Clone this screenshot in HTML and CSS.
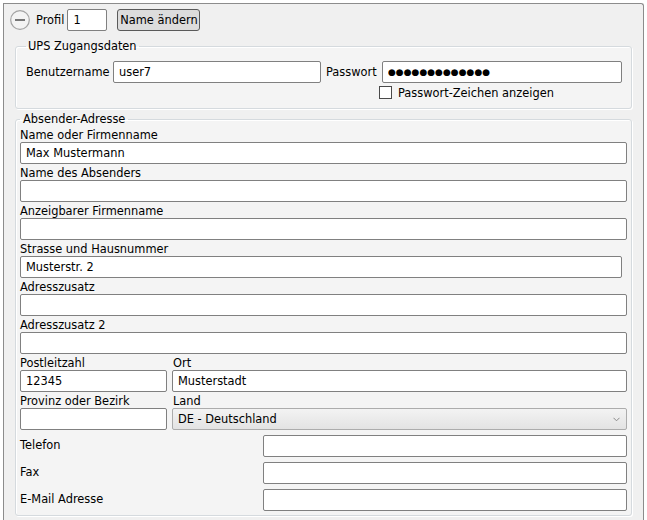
FILE: index.html
```html
<!DOCTYPE html>
<html lang="de">
<head>
<meta charset="utf-8">
<title>Profil</title>
<link rel="stylesheet" href="styles.css">
</head>
<body>
<div class="panel">
  <div class="head">
    <span class="toggle">
      <svg width="20" height="20" viewBox="0 0 20 20">
        <circle cx="10" cy="10" r="9.3" fill="#f3f3f3" stroke="#a3a3a3" stroke-width="1.2"/>
        <rect x="5" y="9" width="10" height="2" fill="#767676"/>
      </svg>
    </span>
    <span class="profil-label">Profil</span>
    <input class="inp profile" type="text" value="1">
    <button class="btn" type="button">Name ändern</button>
  </div>

  <fieldset class="group ups">
    <legend>UPS Zugangsdaten</legend>
    <div class="ups-grid">
      <label class="ups-label">Benutzername</label>
      <input class="inp" type="text" value="user7">
      <label class="ups-label pw-label">Passwort</label>
      <input class="inp pw" type="text" value="●●●●●●●●●●●●●">
      <label class="check"><input class="box" type="checkbox"><span>Passwort-Zeichen anzeigen</span></label>
    </div>
  </fieldset>

  <fieldset class="group addr">
    <legend>Absender-Adresse</legend>
    <div class="field"><label>Name oder Firmenname</label><input class="inp" type="text" value="Max Mustermann"></div>
    <div class="field"><label>Name des Absenders</label><input class="inp" type="text" value=""></div>
    <div class="field"><label>Anzeigbarer Firmenname</label><input class="inp" type="text" value=""></div>
    <div class="field short"><label>Strasse und Hausnummer</label><input class="inp" type="text" value="Musterstr. 2"></div>
    <div class="field"><label>Adresszusatz</label><input class="inp" type="text" value=""></div>
    <div class="field"><label>Adresszusatz 2</label><input class="inp" type="text" value=""></div>
    <div class="pair">
      <div class="field"><label>Postleitzahl</label><input class="inp" type="text" value="12345"></div>
      <div class="field"><label class="ind">Ort</label><input class="inp" type="text" value="Musterstadt"></div>
      <div class="field"><label>Provinz oder Bezirk</label><input class="inp" type="text" value=""></div>
      <div class="field"><label class="ind">Land</label>
        <div class="select"><span>DE - Deutschland</span>
          <svg class="arrow" width="7" height="5" viewBox="0 0 7 5"><path d="M0.5 0.8 L3.5 3.8 L6.5 0.8" fill="none" stroke="#8a8a8a" stroke-width="1"/></svg>
        </div>
      </div>
    </div>
    <div class="contact">
      <label>Telefon</label><input class="inp" type="text" value="">
      <label>Fax</label><input class="inp" type="text" value="">
      <label>E-Mail Adresse</label><input class="inp" type="text" value="">
    </div>
  </fieldset>
</div>
</body>
</html>
```
FILE: styles.css
```css
html, body {
  margin: 0;
  height: 100%;
  overflow: hidden;
  background: #ffffff;
}
body {
  font-family: "DejaVu Sans", "Liberation Sans", sans-serif;
  font-size: 11.4px;
  color: #000;
}
.panel {
  margin: 3px 3px 0;
  border: 1px solid #8c8c8c;
  border-bottom: 0;
  border-top-right-radius: 3px;
  background: #f0f0f0;
  padding: 5px 0 30px;
}
.head {
  display: flex;
  align-items: center;
  height: 22px;
  padding-left: 6px;
  margin-bottom: 8px;
}
.toggle {
  display: block;
  width: 20px;
  height: 20px;
  margin-right: 6px;
}
.toggle svg { display: block; }
.inp {
  box-sizing: border-box;
  height: 22px;
  margin: 0;
  border: 1px solid #808080;
  border-radius: 2px;
  background: #fff;
  padding: 0 5px;
  font: inherit;
  color: #000;
  outline: none;
}
.profile {
  width: 40px;
  margin-left: 3px;
}
.btn {
  box-sizing: border-box;
  width: 83px;
  height: 22px;
  margin-left: 10px;
  padding: 0;
  border: 1px solid #5a5a5a;
  border-radius: 3px;
  background: #dcdcdc;
  font: inherit;
  color: #000;
}
.group {
  margin: 0 11px;
  border: 1px solid #d5dade;
  border-radius: 3px;
  background: #f4f4f4;
  box-shadow: inset 1px 1px 0 #fff, 1px 1px 0 #fff;
  min-width: 0;
}
.group legend {
  line-height: 14px;
  padding: 0 2px;
}
.ups {
  padding: 8px 9px 9px 10px;
}
.ups-grid {
  display: grid;
  grid-template-columns: 87px 208px 61px 1fr;
  align-items: center;
  row-gap: 3px;
}
.pw-label { padding-left: 5px; }
.pw {
  font-size: 9px;
  letter-spacing: 0;
  padding-left: 5px;
}
.check {
  grid-column: 4;
  display: flex;
  align-items: center;
  margin-left: -3px;
  height: 13px;
}
.box {
  appearance: none;
  -webkit-appearance: none;
  box-sizing: border-box;
  width: 13px;
  height: 13px;
  margin: 0 6px 0 0;
  border: 1px solid #4a4a4a;
  background: #fff;
}
.addr {
  margin-top: 3px;
  padding: 0 4px 4px;
}
.addr legend {
  padding: 0 3px;
}
.field label {
  display: block;
  line-height: 16px;
  padding-top: 1px;
  height: 16px;
  box-sizing: border-box;
}
.field .inp {
  display: block;
  width: 100%;
}
.field.short .inp {
  width: calc(100% - 5px);
}
.pair {
  display: grid;
  grid-template-columns: 147px 1fr;
  column-gap: 5px;
}
.field .ind { padding-left: 1px; }
.select {
  box-sizing: border-box;
  height: 22px;
  border: 1px solid #acacac;
  border-radius: 2px;
  background: linear-gradient(#f3f3f3, #e3e3e3);
  display: flex;
  align-items: center;
  justify-content: space-between;
  padding: 0 6px 0 5px;
}
.arrow { display: block; }
.contact {
  display: grid;
  grid-template-columns: 243px 1fr;
  row-gap: 5px;
  margin-top: 5px;
  align-items: start;
}
.contact label {
  line-height: 16px;
  padding-top: 2px;
}
```
